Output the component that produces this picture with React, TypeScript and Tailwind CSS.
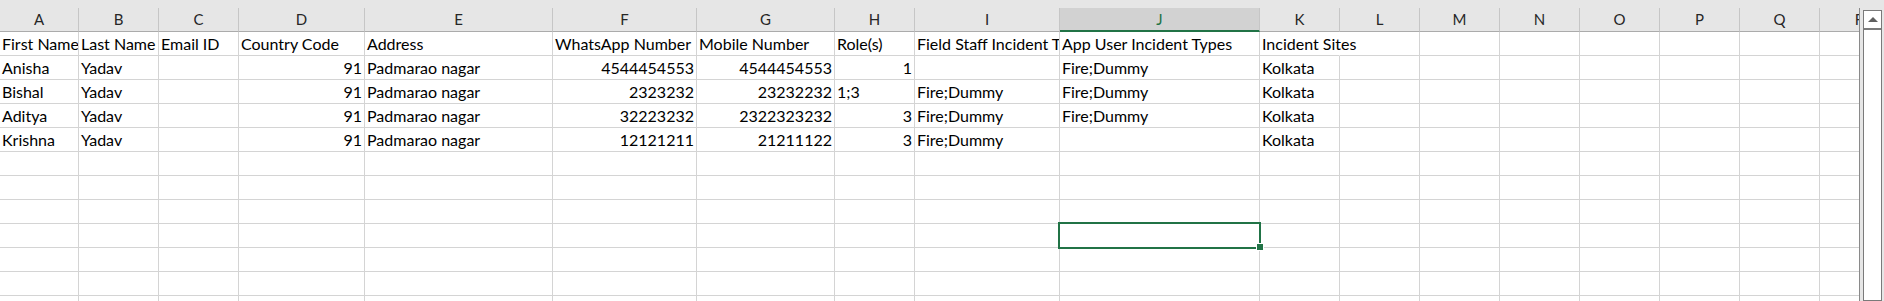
import clsx from "clsx";

type Col = { l: string; w: string };

const cols: Col[] = [
  { l: "A", w: "w-[79px]" },
  { l: "B", w: "w-[80px]" },
  { l: "C", w: "w-[80px]" },
  { l: "D", w: "w-[126px]" },
  { l: "E", w: "w-[188px]" },
  { l: "F", w: "w-[144px]" },
  { l: "G", w: "w-[138px]" },
  { l: "H", w: "w-[80px]" },
  { l: "I", w: "w-[145px]" },
  { l: "J", w: "w-[200px]" },
  { l: "K", w: "w-[80px]" },
  { l: "L", w: "w-[80px]" },
  { l: "M", w: "w-[80px]" },
  { l: "N", w: "w-[80px]" },
  { l: "O", w: "w-[80px]" },
  { l: "P", w: "w-[80px]" },
  { l: "Q", w: "w-[80px]" },
  { l: "R", w: "w-[80px]" },
];

// numbers go right, text goes left – like excel does it
const rows: (string | number)[][] = [
  ["First Name", "Last Name", "Email ID", "Country Code", "Address", "WhatsApp Number", "Mobile Number", "Role(s)", "Field Staff Incident Types", "App User Incident Types", "Incident Sites"],
  ["Anisha", "Yadav", "", 91, "Padmarao nagar", 4544454553, 4544454553, 1, "", "Fire;Dummy", "Kolkata"],
  ["Bishal", "Yadav", "", 91, "Padmarao nagar", 2323232, 23232232, "1;3", "Fire;Dummy", "Fire;Dummy", "Kolkata"],
  ["Aditya", "Yadav", "", 91, "Padmarao nagar", 32223232, 2322323232, 3, "Fire;Dummy", "Fire;Dummy", "Kolkata"],
  ["Krishna", "Yadav", "", 91, "Padmarao nagar", 12121211, 21211122, 3, "Fire;Dummy", "", "Kolkata"],
];

const totalRows = 12;

function Cell({ col, value, spill }: { col: Col; value: string | number | undefined; spill: boolean }) {
  const isNum = typeof value === "number";
  return (
    <div
      className={clsx(
        "h-[24px] shrink-0 border-b border-r border-b-[#d4d4d4] px-[2px] pt-[1px] text-[16px] leading-[22px] whitespace-nowrap text-black",
        col.w,
        spill ? "relative z-10 overflow-visible border-r-transparent" : "overflow-hidden border-r-[#d4d4d4]",
        isNum && "text-right"
      )}
    >
      {value === undefined || value === "" ? "" : value}
    </div>
  );
}

export default function App() {
  return (
    <div
      className="flex h-[301px] w-[1884px] flex-col overflow-hidden bg-[#e6e6e6]"
      style={{ fontFamily: "Lato, 'Open Sans', sans-serif" }}
    >
      {/* strip above column letters */}
      <div className="h-[8px] shrink-0" />

      <div className="flex min-h-0 flex-1">
        {/* sheet */}
        <div className="relative w-[1859px] shrink-0 overflow-hidden">
          {/* column letters */}
          <div className="flex">
            {cols.map((c) => (
              <div
                key={c.l}
                className={clsx(
                  "flex h-[24px] shrink-0 items-center justify-center border-r border-r-[#c6c6c6] text-[15px]",
                  c.w,
                  c.l === "J"
                    ? "border-b-2 border-b-[#217346] bg-[#d2d2d2] text-[#217346]"
                    : "border-b border-b-[#ababab] text-[#262626]"
                )}
              >
                {c.l}
              </div>
            ))}
          </div>

          {/* cells */}
          <div className="bg-white">
            {Array.from({ length: totalRows }).map((_, r) => (
              <div key={r} className="flex">
                {cols.map((c, ci) => (
                  <Cell
                    key={c.l}
                    col={c}
                    value={rows[r]?.[ci]}
                    spill={r === 0 && c.l === "K"}
                  />
                ))}
              </div>
            ))}
          </div>

          {/* active cell J9 */}
          <div className="absolute left-[1058px] top-[214px] z-20 h-[27px] w-[203px] border-2 border-[#217346]" />
          <div className="absolute left-[1256px] top-[235px] z-30 h-[8px] w-[8px] border border-white bg-[#217346]" />
        </div>

        {/* vertical scrollbar */}
        <div className="flex flex-1 border-l border-l-[#8a8a8a] pl-[3px] pr-[2px] pt-[2px]">
          <div className="flex w-[19px] flex-col border border-[#7a7a7a] bg-white">
            <div className="flex h-[19px] items-center justify-center border-b-2 border-b-[#7a7a7a] bg-white">
              <svg width="10" height="5" viewBox="0 0 10 5">
                <path d="M0 5 L5 0 L10 5 Z" fill="#606060" />
              </svg>
            </div>
            <div className="flex-1" />
          </div>
        </div>
      </div>
    </div>
  );
}
